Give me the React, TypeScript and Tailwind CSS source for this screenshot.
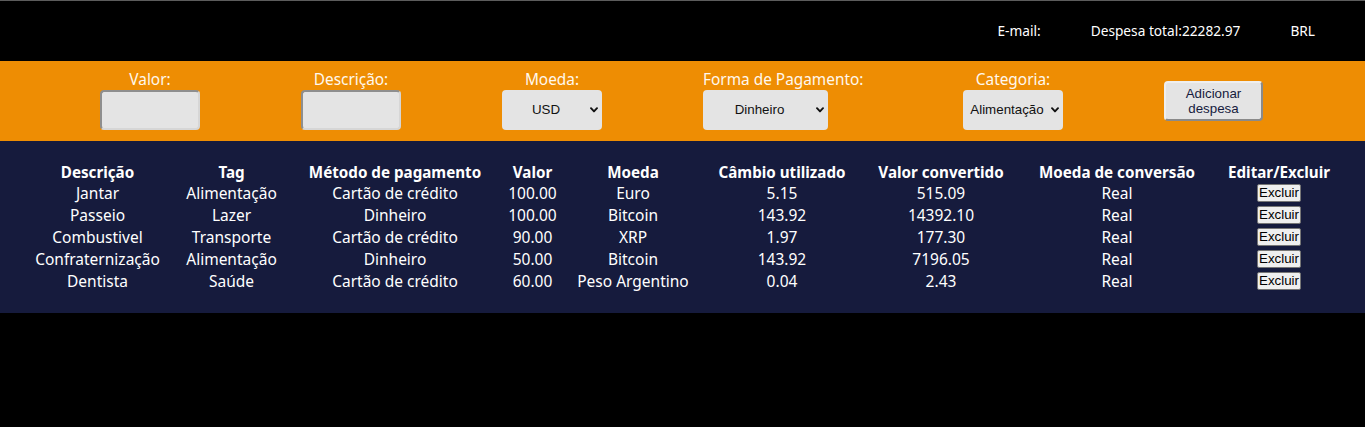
import React from "react";

const rows = [
  ["Jantar", "Alimentação", "Cartão de crédito", "100.00", "Euro", "5.15", "515.09", "Real"],
  ["Passeio", "Lazer", "Dinheiro", "100.00", "Bitcoin", "143.92", "14392.10", "Real"],
  ["Combustivel", "Transporte", "Cartão de crédito", "90.00", "XRP", "1.97", "177.30", "Real"],
  ["Confraternização", "Alimentação", "Dinheiro", "50.00", "Bitcoin", "143.92", "7196.05", "Real"],
  ["Dentista", "Saúde", "Cartão de crédito", "60.00", "Peso Argentino", "0.04", "2.43", "Real"],
];

const heads = [
  "Descrição",
  "Tag",
  "Método de pagamento",
  "Valor",
  "Moeda",
  "Câmbio utilizado",
  "Valor convertido",
  "Moeda de conversão",
  "Editar/Excluir",
];

function Chevron() {
  return (
    <svg width="8" height="6" viewBox="0 0 8 6" className="shrink-0">
      <path d="M1 1.2 L4 4.4 L7 1.2" stroke="#111" strokeWidth="1.9" fill="none" strokeLinecap="round" strokeLinejoin="round" />
    </svg>
  );
}

function FakeSelect({ value, widthClass }: { value: string; widthClass: string }) {
  return (
    <div
      className={`${widthClass} flex h-[40px] items-center gap-[4px] rounded-[4px] bg-[#e4e4e4] px-[4px] font-['Liberation_Sans',Arial,sans-serif] text-[13.33px] text-[#111]`}
    >
      <span className="flex-1 whitespace-nowrap text-center">{value}</span>
      <Chevron />
    </div>
  );
}

function FakeInput() {
  return (
    <div className="h-[40px] w-[100px] rounded-[4px] border-2 border-t-[#8e8e8e] border-l-[#8e8e8e] border-b-[#d6d6d6] border-r-[#d6d6d6] bg-[#e4e4e4]" />
  );
}

function Label({ children }: { children: React.ReactNode }) {
  return <div className="h-[20px] whitespace-nowrap text-[15.4px] leading-[20px] text-[#fff8ee]">{children}</div>;
}

export default function App() {
  return (
    <div className="min-h-screen bg-black font-['Noto_Sans',sans-serif] text-white">
      <div className="h-[1px] bg-[#5c5c5c]" />
      <header className="flex h-[60px] items-center justify-end gap-[50px] pr-[50px] text-[13.7px]">
        <span>E-mail:</span>
        <span>Despesa total:22282.97</span>
        <span>BRL</span>
      </header>

      <div className="flex h-[80px] items-center justify-center gap-[101px] bg-[#ee8d03] pr-[2px]">
        <div className="flex w-[100px] flex-col items-center pb-[2px]">
          <Label>Valor:</Label>
          <FakeInput />
        </div>
        <div className="flex w-[100px] flex-col items-center pb-[2px]">
          <Label>Descrição:</Label>
          <FakeInput />
        </div>
        <div className="flex w-[100px] flex-col items-center pb-[2px]">
          <Label>Moeda:</Label>
          <FakeSelect value="USD" widthClass="w-[100px]" />
        </div>
        <div className="flex w-[159px] flex-col items-start pb-[2px]">
          <Label>Forma de Pagamento:</Label>
          <FakeSelect value="Dinheiro" widthClass="w-[125px]" />
        </div>
        <div className="flex w-[100px] flex-col items-center pb-[2px]">
          <Label>Categoria:</Label>
          <FakeSelect value="Alimentação" widthClass="w-[100px]" />
        </div>
        <button className="h-[40px] w-[99px] rounded-[4px] border-2 border-t-[#efefef] border-l-[#efefef] border-b-[#8a8a8a] border-r-[#8a8a8a] bg-[#e4e4e4] font-['Liberation_Sans',Arial,sans-serif] text-[13.33px] leading-[15px] text-[#161b3d]">
          Adicionar
          <br />
          despesa
        </button>
      </div>

      <div className="bg-[#161b3d] px-[22px] pt-[21px] pb-[20px] text-[15.5px]">
        <div className="grid grid-cols-[151px_117px_210px_65px_136px_162px_156px_196px_128px] text-center">
          {heads.map((h) => (
            <div key={h} className="flex h-[21px] items-center justify-center whitespace-nowrap text-[15.2px] font-bold">
              {h}
            </div>
          ))}
          {rows.map((r, i) => (
            <React.Fragment key={i}>
              {r.map((c, j) => (
                <div key={j} className="flex h-[22px] items-center justify-center whitespace-nowrap">
                  {c}
                </div>
              ))}
              <div className="flex h-[22px] items-center justify-center">
                <button className="mb-[2px] h-[18px] rounded-[2px] border border-[#767676] bg-[#efefef] px-[1px] font-['Liberation_Sans',Arial,sans-serif] text-[13.33px] leading-[14px] text-black">
                  Excluir
                </button>
              </div>
            </React.Fragment>
          ))}
        </div>
      </div>
    </div>
  );
}
